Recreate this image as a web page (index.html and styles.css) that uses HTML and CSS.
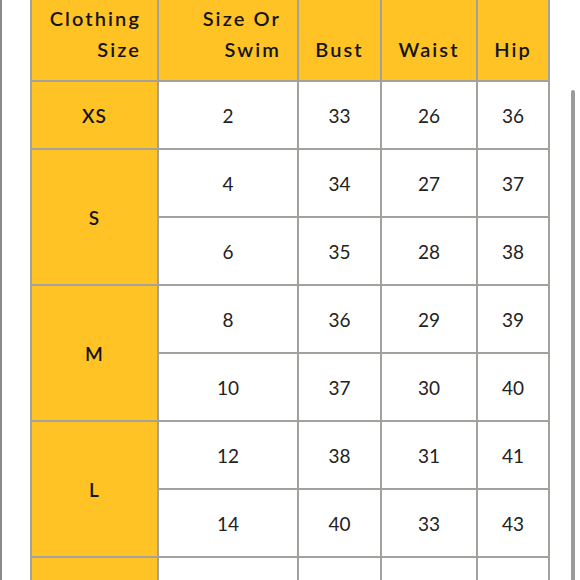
FILE: index.html
```html
<!DOCTYPE html>
<html>
<head>
<meta charset="utf-8">
<link rel="stylesheet" href="styles.css">
</head>
<body>
<div class="page">
  <table class="chart">
    <colgroup>
      <col class="c1"><col class="c2"><col class="c3"><col class="c4"><col class="c5">
    </colgroup>
    <thead>
      <tr class="head">
        <th class="right">Clothing<br>Size</th>
        <th class="right">Size Or<br>Swim</th>
        <th>Bust</th>
        <th>Waist</th>
        <th>Hip</th>
      </tr>
    </thead>
    <tbody>
      <tr><td class="size">XS</td><td>2</td><td>33</td><td>26</td><td>36</td></tr>
      <tr><td class="size" rowspan="2">S</td><td>4</td><td>34</td><td>27</td><td>37</td></tr>
      <tr><td>6</td><td>35</td><td>28</td><td>38</td></tr>
      <tr><td class="size" rowspan="2">M</td><td>8</td><td>36</td><td>29</td><td>39</td></tr>
      <tr><td>10</td><td>37</td><td>30</td><td>40</td></tr>
      <tr><td class="size" rowspan="2">L</td><td>12</td><td>38</td><td>31</td><td>41</td></tr>
      <tr><td>14</td><td>40</td><td>33</td><td>43</td></tr>
      <tr><td class="size">&nbsp;</td><td>&nbsp;</td><td>&nbsp;</td><td>&nbsp;</td><td>&nbsp;</td></tr>
    </tbody>
  </table>
  <div class="scrollbar"></div>
</div>
</body>
</html>
```

FILE: styles.css
```css
html, body {
  margin: 0;
  padding: 0;
  background: #fff;
}
.page {
  position: relative;
  width: 580px;
  height: 580px;
  overflow: hidden;
  box-sizing: border-box;
  border-left: 2px solid #8a8a8a;
  font-family: "Lato", "Open Sans", sans-serif;
}
.chart {
  margin-left: 28px;
  margin-top: -2px;
  border-collapse: collapse;
  table-layout: fixed;
  width: 518px;
}
.c1 { width: 127px; }
.c2 { width: 140px; }
.c3 { width: 83px; }
.c4 { width: 96px; }
.c5 { width: 72px; }
.chart th, .chart td {
  border: 2px solid #a3a19c;
  padding: 0;
  text-align: center;
}
.chart th {
  background: #ffc325;
  color: #151515;
  font-weight: 600;
  font-size: 20px;
  letter-spacing: 2.1px;
  line-height: 31px;
  height: 82px;
  vertical-align: bottom;
  padding-bottom: 15px;
  box-sizing: border-box;
}
.chart th.right {
  text-align: right;
  padding-right: 16px;
}
.chart td {
  height: 68px;
  box-sizing: border-box;
  font-size: 19px;
  color: #222;
  font-weight: 400;
  background: #fff;
}
.chart td.size {
  background: #ffc325;
  color: #151515;
  font-weight: 600;
  letter-spacing: 1px;
}
.scrollbar {
  position: absolute;
  left: 569px;
  top: 90px;
  width: 4px;
  height: 500px;
  background: #9b9b9b;
  border-radius: 2px;
}
```
